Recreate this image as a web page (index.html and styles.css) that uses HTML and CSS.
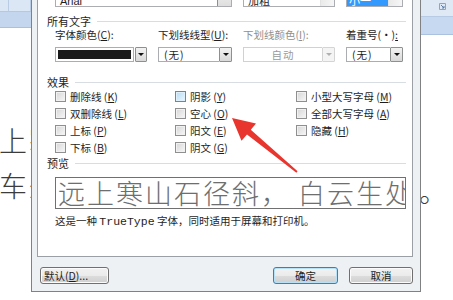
FILE: index.html
```html
<!DOCTYPE html>
<html lang="zh-CN">
<head>
<meta charset="utf-8">
<title>字体</title>
<link rel="stylesheet" href="styles.css">
</head>
<body>
<div class="desk">
  <div class="doc">
    <div class="ribbon">
      <div class="rib-left">
        <div class="cells"><span class="cell c1"></span><span class="cell c2"></span></div>
        <div class="band"></div>
      </div>
      <div class="rib-mid"></div>
      <div class="rib-right">
        <div class="rbox">
          <svg class="launcher" width="7" height="7" viewBox="0 0 7 7"><path d="M0.5 0.5h6v6h-6z" fill="none" stroke="#8aa4c4"/><path d="M2 2l3 3M5 3v2h-2" fill="none" stroke="#5f7ea6"/></svg>
        </div>
        <div class="band"></div>
      </div>
    </div>
    <div class="doc-text">
      <p class="doc-line">远上寒山石径斜，白云生处有人家</p>
      <p class="doc-line">停车坐爱枫林晚，霜叶红于二月花<span class="stop">。</span></p>
    </div>
  </div>

  <div class="dialog">
    <div class="panel">
      <div class="toprow">
        <div class="lbox wide">
          <div class="lfield"><span class="ltext">Arial</span></div>
          <div class="dbtn"><i class="tri"></i></div>
        </div>
        <div class="lbox">
          <div class="lfield"><span class="ltext">加粗</span></div>
          <div class="sbtn"></div>
        </div>
        <div class="lbox">
          <div class="lfield"><span class="ltext sel">小一</span></div>
          <div class="sbtn"></div>
        </div>
      </div>

      <div class="group-h">所有文字</div>
      <div class="fields">
        <div class="flabel">字体颜色(<u>C</u>):</div>
        <div class="flabel">下划线线型(<u>U</u>):</div>
        <div class="flabel dis">下划线颜色(<u>I</u>):</div>
        <div class="flabel">着重号(·)<u>:</u></div>

        <div class="combo">
          <div class="cfield swatchbox"><span class="swatch"></span></div>
          <div class="cbtn sep"><i class="tri"></i></div>
        </div>
        <div class="combo">
          <div class="cfield"><span class="ctext">(无)</span></div>
          <div class="cbtn"><i class="tri"></i></div>
        </div>
        <div class="combo disabled">
          <div class="cfield center"><span class="ctext">自动</span></div>
          <div class="cbtn"><i class="tri"></i></div>
        </div>
        <div class="combo">
          <div class="cfield"><span class="ctext">(无)</span></div>
          <div class="cbtn"><i class="tri"></i></div>
        </div>
      </div>

      <div class="group-h g2">效果</div>
      <div class="effects">
        <label class="cb"><span class="box"></span><span class="cbt">删除线 (<u>K</u>)</span></label>
        <label class="cb"><span class="box hover"></span><span class="cbt">阴影 (<u>Y</u>)</span></label>
        <label class="cb"><span class="box"></span><span class="cbt">小型大写字母 (<u>M</u>)</span></label>
        <label class="cb"><span class="box"></span><span class="cbt">双删除线 (<u>L</u>)</span></label>
        <label class="cb"><span class="box"></span><span class="cbt">空心 (<u>O</u>)</span></label>
        <label class="cb"><span class="box"></span><span class="cbt">全部大写字母 (<u>A</u>)</span></label>
        <label class="cb"><span class="box"></span><span class="cbt">上标 (<u>P</u>)</span></label>
        <label class="cb"><span class="box"></span><span class="cbt">阳文 (<u>E</u>)</span></label>
        <label class="cb"><span class="box"></span><span class="cbt">隐藏 (<u>H</u>)</span></label>
        <label class="cb"><span class="box"></span><span class="cbt">下标 (<u>B</u>)</span></label>
        <label class="cb"><span class="box"></span><span class="cbt">阴文 (<u>G</u>)</span></label>
      </div>

      <div class="group-h g3">预览</div>
      <div class="preview">远上寒山石径斜， 白云生处有人家</div>
      <p class="caption">这是一种 <span class="mono">TrueType</span> 字体，同时适用于屏幕和打印机。</p>
    </div>

    <div class="footer">
      <button class="wbtn left">默认(<u>D</u>)...</button>
      <div class="btn-group">
        <button class="wbtn def">确定</button>
        <button class="wbtn">取消</button>
      </div>
    </div>
  </div>

  <svg class="arrow" width="453" height="300" viewBox="0 0 453 300">
    <polygon points="232,118 256,123.5 250.8,129.8 297.6,171.2 296.4,172.8 247,134.4 241.5,140.8" fill="#e8352e"/>
  </svg>
</div>
</body>
</html>
```

FILE: styles.css
```css
* { box-sizing: border-box; margin: 0; padding: 0; }
html, body { width: 453px; height: 300px; overflow: hidden; background: #fff; }
body {
  font-family: "Noto Sans CJK SC", "Noto Sans", sans-serif;
  font-size: 10.5px;
  color: #1e1e1e;
}
u { text-decoration: underline; text-underline-offset: 1px; }

.desk { position: relative; width: 453px; height: 300px; overflow: hidden; }

/* ---------- document behind ---------- */
.doc { width: 453px; height: 300px; background: #fff; }
.ribbon { display: flex; height: 35px; }
.rib-left { width: 31px; display: flex; flex-direction: column; }
.rib-left .cells { height: 12px; display: flex; background: #dbe7f5; border-bottom: 1px solid #b4c8e2; }
.cell { height: 100%; border-right: 1px solid #b9cce4; }
.cell.c1 { width: 9px; }
.cell.c2 { flex: 1; }
.rib-left .band { height: 16px; background: #c3d6ee; border-bottom: 1px solid #a9c0df; }
.rib-mid { flex: 1; }
.rib-right { width: 32px; display: flex; flex-direction: column; }
.rbox { height: 17px; background: #dfe9f6; border-bottom: 1px solid #b7cbe4; display: flex; justify-content: flex-end; padding: 3px 7px 0 0; }
.launcher { display: block; }
.rib-right .band { height: 18px; background: #c6d9f0; border-bottom: 1px solid #aac1df; }

.doc-text { padding-top: 83px; margin-left: -31px; }
.doc-line {
  font-size: 28px; line-height: 45px; letter-spacing: 2px;
  color: #3c3c3c; white-space: nowrap; font-weight: 300;
}
.stop { vertical-align: -6px; }

/* ---------- dialog ---------- */
.dialog {
  position: absolute; left: 31px; top: -14px; width: 390px;
  border: 1px solid #7f8183;
  background: #eef1f4;
  padding: 0 7px 7px 5px;
}
.panel {
  background: #fff;
  border: 1px solid #9aa0a6;
  padding: 0 6px 27px 9px;
}

.toprow {
  display: grid;
  grid-template-columns: 92px 74px 92px 57px;
  column-gap: 11px;
  height: 19px;
  margin-left: 8px;
}
.lbox { display: flex; border: 1px solid #abadb3; border-top: none; background: #fff; }
.lbox.wide { grid-column: span 2; }
.lfield { flex: 1; display: flex; align-items: flex-end; padding: 0 2px 1px 2px; overflow: hidden; }
.ltext { font-family: "Liberation Sans", "Noto Sans CJK SC", sans-serif; font-size: 11px; line-height: 12px; padding: 0 2px; margin-bottom: 0; }
.lbox .lfield .ltext:not(.sel) { margin-bottom: -2px; }
.ltext.sel { background: #3399ff; color: #fff; flex: 1; align-self: stretch; display: flex; align-items: flex-end; margin: 0 -2px -1px -2px; padding: 0 2px 0 2px; font-family: "Noto Sans CJK SC", sans-serif; }
.dbtn { width: 14px; border-left: 1px solid #8e8f8f; background: linear-gradient(#f4f4f4, #dedede); display: flex; align-items: center; justify-content: center; }
.sbtn { width: 14px; background: linear-gradient(90deg, #eaeaea, #f6f6f6); border-left: 1px solid #e2e2e2; }

.group-h {
  display: flex; align-items: center;
  height: 12px; margin-top: 8px;
  font-size: 11px; line-height: 12px; color: #1e1e1e;
}
.group-h::after { content: ""; flex: 1; border-top: 1px solid #d8dde3; margin-left: 6px; }
.group-h.g2 { margin-top: 14px; }
.group-h.g3 { margin-top: 1px; }

.fields {
  display: grid;
  grid-template-columns: 92px 74px 92px 57px;
  grid-template-rows: 14px 15px;
  column-gap: 11px; row-gap: 5px;
  margin: 1px 0 0 8px;
}
.flabel { font-size: 10.5px; line-height: 14px; white-space: nowrap; }
.flabel.dis { color: #8f8f8f; }

.combo { display: flex; height: 15px; }
.cfield { flex: 1; display: flex; align-items: center; border: 1px solid #abadb3; border-right: none; background: #fff; padding-left: 5px; }
.cfield.center { justify-content: center; padding-left: 0; }
.ctext { font-size: 10.5px; line-height: 13px; letter-spacing: 1px; }
.swatchbox { padding: 2px; border-right: 1px solid #abadb3; }
.swatch { display: block; width: 100%; height: 100%; background: #1b1b1b; }
.cbtn {
  width: 13px; display: flex; align-items: center; justify-content: center;
  border: 1px solid #8e8f8f; border-radius: 1px;
  background: linear-gradient(#f3f3f3, #d9d9d9);
}
.cbtn.sep { margin-left: 1px; width: 12px; }
.tri { display: block; width: 0; height: 0; border-left: 3px solid transparent; border-right: 3px solid transparent; border-top: 3px solid #111; }
.combo.disabled .cfield { border-color: #cfd1d4; }
.combo.disabled .ctext { color: #9a9a9a; }
.combo.disabled .cbtn { border-color: #d4d4d4; background: #f4f4f4; }
.combo.disabled .tri { border-top-color: #b0b0b0; }

.effects {
  display: grid;
  grid-template-columns: 120px 121px 1fr;
  grid-auto-rows: 17px;
  margin-left: 8px;
}
.cb { display: flex; align-items: center; gap: 4px; font-size: 10.5px; line-height: 17px; white-space: nowrap; }
.cbt { display: block; }
.box {
  width: 11px; height: 11px; flex: none;
  border: 1px solid #8f8f8f;
  background: linear-gradient(135deg, #d6d6d6, #f7f7f7);
  box-shadow: inset 0 0 0 1px #f1f1f1;
}
.box.hover { border-color: #4f8fc4; background: linear-gradient(135deg, #b4dcf6, #ecf7fd); box-shadow: inset 0 0 0 1px #def0fb; }

.preview {
  margin: 8px 0 0 8px;
  height: 32px;
  border: 1px solid #707070;
  background: #fff;
  overflow: hidden;
  white-space: nowrap;
  font-size: 27px; line-height: 29px; letter-spacing: 2px;
  color: #6e6e6e; font-weight: 300;
  padding-left: 2px;
}
.caption { margin: 5px 0 0 8px; font-size: 10.5px; line-height: 14px; white-space: nowrap; }
.mono { font-family: "Liberation Mono", monospace; font-size: 11.5px; }

.footer { display: flex; justify-content: space-between; margin-top: 10px; padding-left: 3px; }
.btn-group { display: flex; gap: 11px; }
.wbtn {
  height: 17px; width: 64px;
  font-family: "Noto Sans CJK SC", sans-serif; font-size: 10.5px; line-height: 15px; color: #1e1e1e;
  border: 1px solid #707070; border-radius: 3px;
  background: linear-gradient(#f2f2f2 0%, #ebebeb 50%, #dddddd 51%, #cfcfcf 100%);
  box-shadow: inset 0 0 0 1px #fbfbfb;
  text-align: center;
}
.wbtn.left { width: 69px; text-align: left; padding-left: 3px; }
.wbtn.def { width: 65px; border-color: #3c7fb1; box-shadow: inset 0 0 0 1px #b7e1f7; }

.arrow { position: absolute; left: 0; top: 0; pointer-events: none; }
```
